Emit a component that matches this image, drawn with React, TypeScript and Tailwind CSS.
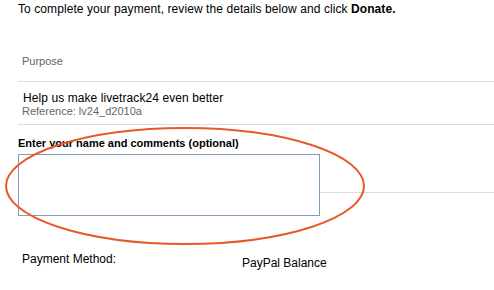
import React from 'react';

// Donation review panel with the comment box circled
const App: React.FC = () => {
  return (
    <div className="relative w-[494px] h-[290px] overflow-hidden bg-white text-black font-['Liberation_Sans',Arial,sans-serif]">
      <div className="pl-[18px]">
        <p className="pt-[2px] text-[12px] leading-[14px] tracking-[0.08px]">
          To complete your payment, review the details below and click <b>Donate.</b>
        </p>

        {/* Purpose header */}
        <div className="mt-[39px] pl-[4px] pb-[13px] text-[11px] leading-[13px] text-[#666] border-b border-[#dcdcdc]">
          Purpose
        </div>

        {/* Item row */}
        <div className="pt-[9px] pb-[6px] pl-[5px] border-b border-[#dcdcdc]">
          <div className="text-[12px] leading-[14px] tracking-[0.08px]">Help us make livetrack24 even better</div>
          <div className="-ml-[1px] text-[11px] leading-[13px] text-[#666]">Reference: lv24_d2010a</div>
        </div>

        {/* Comments */}
        <div className="mt-[12px] text-[11px] leading-[13px] font-bold">Enter your name and comments (optional)</div>
        <div className="mt-[4px] flex items-start">
          <textarea className="block w-[302px] h-[62px] p-[2px] resize-none border border-[#7f9db9] bg-white text-[12px] outline-none" />
          <div className="flex-1 h-[39px] border-b border-[#dcdcdc]" />
        </div>

        {/* Payment method */}
        <div className="mt-[36px] pl-[4px] flex items-start text-[12px] leading-[14px]">
          <span className="w-[220px]">Payment Method:</span>
          <span className="mt-[4px]">PayPal Balance</span>
        </div>
      </div>

      {/* hand-drawn highlight */}
      <svg className="absolute inset-0 pointer-events-none" width="494" height="290" viewBox="0 0 494 290">
        <ellipse cx="185" cy="186" rx="179" ry="58" fill="none" stroke="#e8582a" strokeWidth="2" />
      </svg>
    </div>
  );
};

export default App;
